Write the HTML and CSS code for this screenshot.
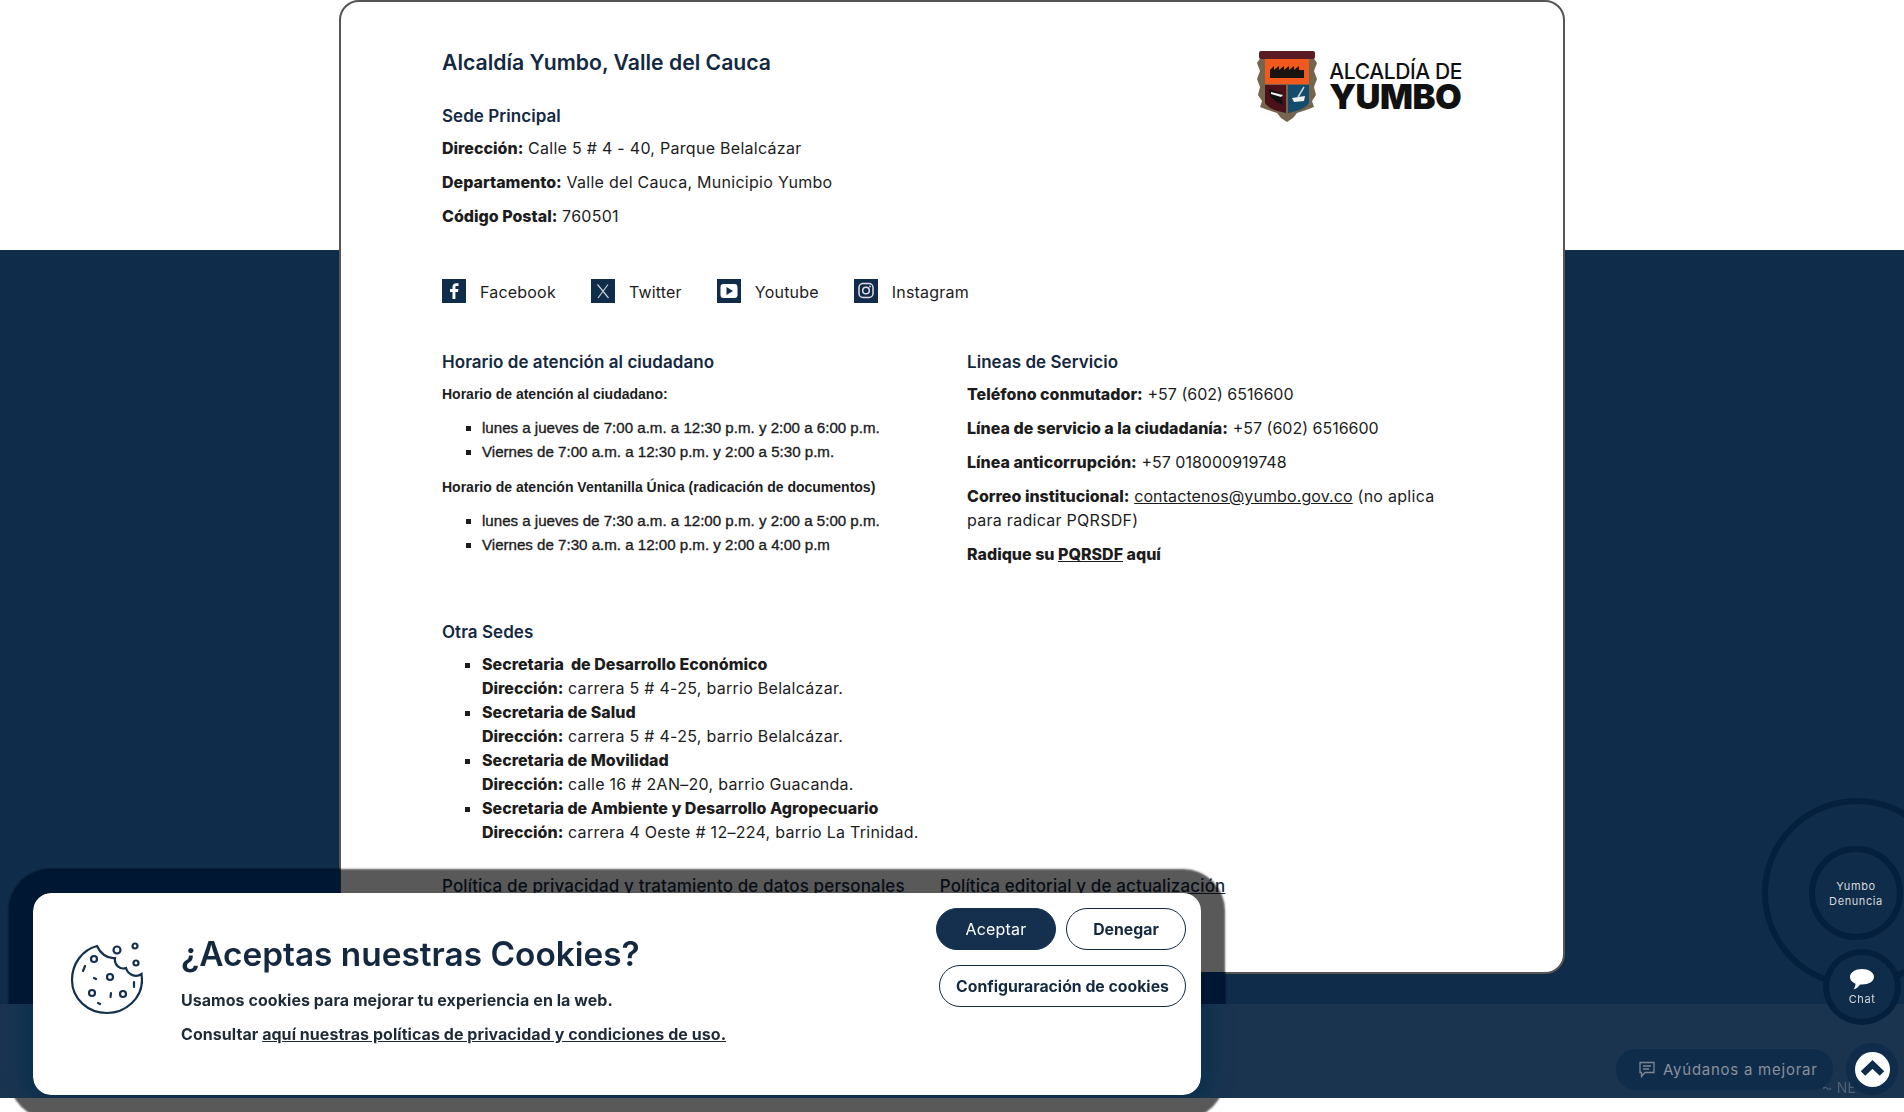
FILE: index.html
```html
<!DOCTYPE html>
<html lang="es">
<head>
    <meta charset="UTF-8">
    <meta name="viewport" content="width=device-width, initial-scale=1.0">
    <title>Alcaldía de Yumbo</title>
    <link rel="stylesheet" href="styles.css">
</head>
<body>

    <main class="main">
        <div class="contact-card">

            <!-- Header -->
            <div class="card-top">
                <div>
                    <h1>Alcaldía Yumbo, Valle del Cauca</h1>
                    <h3 class="sede-title">Sede Principal</h3>
                    <p><b>Dirección:</b> Calle 5 # 4 - 40, Parque Belalcázar</p>
                    <p><b>Departamento:</b> Valle del Cauca, Municipio Yumbo</p>
                    <p><b>Código Postal:</b> 760501</p>
                </div>
                <div class="logo">
                    <svg class="shield" viewBox="0 0 60 71" width="60" height="71">
                        <path d="M4 6 L0 12 L3 20 L0 28 L3 36 L1 44 L5 50 L3 56 L11 59 L20 62 L24 67 L30 71 L36 67 L40 62 L49 59 L57 56 L55 50 L59 44 L57 36 L60 28 L57 20 L60 12 L56 6 Z" fill="#75654f"/>
                        <rect x="2" y="0" width="56" height="8" rx="2" fill="#5c1a22"/>
                        <rect x="8" y="8" width="44" height="25" fill="#f2591c"/>
                        <path d="M13 27 V19 L17 15 V19 L22 15 V19 L27 15 V19 L32 15 V19 L37 15 V19 L42 15 V19 L47 19 V27 Z" fill="#1a1410"/>
                        <path d="M8 34 H29 V62 C20 60 12 58 8 52 Z" fill="#4a1118"/>
                        <path d="M31 34 H52 V52 C48 58 40 60 31 62 Z" fill="#124b6c"/>
                        <path d="M12 38 L24 42 L26 54 L18 50 L13 45 Z" fill="#15100f"/>
                        <path d="M14 41 L26 44 L24 46 L14 43 Z" fill="#eee"/>
                        <path d="M35 47 L48 45 L47 50 L37 51 Z" fill="#eee"/>
                        <path d="M41 46 L47 36" stroke="#c9d4da" stroke-width="1.5"/>
                    </svg>
                    <div class="logo-text">
                        <span class="logo-small">ALCALDÍA DE</span>
                        <span class="logo-big">YUMBO</span>
                    </div>
                </div>
            </div>

            <!-- Redes -->
            <div class="social">
                <a class="social-link" href="#">
                    <svg viewBox="0 0 24 24" width="24" height="24"><rect width="24" height="24" fill="#0f2c4b"/><path d="M13.4 20 V12.9 H16 L16.4 10 H13.4 V8.3 C13.4 7.4 13.7 6.9 14.9 6.9 H16.5 V4.3 C16.2 4.3 15.3 4.2 14.3 4.2 C12 4.2 10.500 5.600 10.500 8 V10 H8 V12.900 H10.500 V20 Z" fill="#fff"/></svg>
                    <span>Facebook</span>
                </a>
                <a class="social-link" href="#">
                    <svg viewBox="0 0 24 24" width="24" height="24"><rect width="24" height="24" fill="#0f2c4b"/><path d="M6.500 5.500 L17.500 19 M17 5.500 L7 19" stroke="#c9ced6" stroke-width="1.200" fill="none"/></svg>
                    <span>Twitter</span>
                </a>
                <a class="social-link" href="#">
                    <svg viewBox="0 0 24 24" width="24" height="24"><rect width="24" height="24" fill="#0f2c4b"/><rect x="3.500" y="5" width="17" height="14" rx="3" fill="#fff"/><path d="M9.500 8 L16 12 L9.500 16 Z" fill="#0f2c4b"/></svg>
                    <span>Youtube</span>
                </a>
                <a class="social-link" href="#">
                    <svg viewBox="0 0 24 24" width="24" height="24"><rect width="24" height="24" fill="#0f2c4b"/><rect x="5" y="4.500" width="14" height="14" rx="4" fill="none" stroke="#e3dbe8" stroke-width="1.500"/><circle cx="12" cy="11.500" r="3.300" fill="none" stroke="#e3dbe8" stroke-width="1.500"/><circle cx="16" cy="7.500" r=".9" fill="#e3dbe8"/></svg>
                    <span>Instagram</span>
                </a>
            </div>

            <!-- Horarios y lineas -->
            <div class="columns">
                <div class="col-left">
                    <h3>Horario de atención al ciudadano</h3>
                    <p class="small-title">Horario de atención al ciudadano:</p>
                    <ul class="hours">
                        <li>lunes a jueves de 7:00 a.m. a 12:30 p.m. y 2:00 a 6:00 p.m.</li>
                        <li>Viernes de 7:00 a.m. a 12:30 p.m. y 2:00 a 5:30 p.m.</li>
                    </ul>
                    <p class="small-title">Horario de atención Ventanilla Única (radicación de documentos)</p>
                    <ul class="hours">
                        <li>lunes a jueves de 7:30 a.m. a 12:00 p.m. y 2:00 a 5:00 p.m.</li>
                        <li>Viernes de 7:30 a.m. a 12:00 p.m. y 2:00 a 4:00 p.m</li>
                    </ul>
                </div>
                <div class="col-right">
                    <h3>Lineas de Servicio</h3>
                    <p><b>Teléfono conmutador:</b> <span class="phone">+57 (602) 6516600</span></p>
                    <p><b>Línea de servicio a la ciudadanía:</b> <span class="phone">+57 (602) 6516600</span></p>
                    <p><b>Línea anticorrupción:</b> <span class="phone">+57 018000919748</span></p>
                    <p><b>Correo institucional:</b> <a class="mail" href="#">contactenos@yumbo.gov.co</a> (no aplica<br>para radicar PQRSDF)</p>
                    <p><b>Radique su <a href="#">PQRSDF</a> aquí</b></p>
                </div>
            </div>

            <!-- Otras sedes -->
            <h3>Otra Sedes</h3>
            <ul class="sedes">
                <li><b>Secretaria &nbsp;de Desarrollo Económico</b><br><b>Dirección:</b> carrera 5 # 4-25, barrio Belalcázar.</li>
                <li><b>Secretaria de Salud</b><br><b>Dirección:</b> carrera 5 # 4-25, barrio Belalcázar.</li>
                <li><b>Secretaria de Movilidad</b><br><b>Dirección:</b> calle 16 # 2AN–20, barrio Guacanda.</li>
                <li><b>Secretaria de Ambiente y Desarrollo Agropecuario</b><br><b>Dirección:</b> carrera 4 Oeste # 12–224, barrio La Trinidad.</li>
            </ul>

            <div class="policy-links">
                <a href="#">Política de privacidad y tratamiento de datos personales</a>
                <a href="#">Política editorial y de actualización</a>
            </div>
        </div>
    </main>

    <footer class="footer"></footer>

    <!-- Botones flotantes -->
    <div class="big-ring"></div>
    <a class="float-circle denuncia" href="#">Yumbo<br>Denuncia</a>
    <a class="float-circle chat" href="#">
        <svg viewBox="0 0 24 21" width="24" height="21"><path d="M12 0 C18.500 0 24 3.500 24 8 C24 12.500 18.500 15.500 12 15.500 L10 15.500 C8.500 18 6 20 3.500 20.500 C5 18.500 5.500 16.500 5.500 14.800 C2.300 13.500 0 11 0 8 C0 3.500 5.500 0 12 0 Z" fill="#fff"/></svg>
        <span>Chat</span>
    </a>
    <a class="feedback" href="#">
        <svg viewBox="0 0 18 18" width="18" height="18"><path d="M2 1.500 H16 V11.500 H7 L3.500 15.500 V11.500 H2 Z M5 5 H13 M5 8 H11" fill="none" stroke="#7e8792" stroke-width="1.300"/></svg>
        <span>Ayúdanos a mejorar</span>
    </a>
    <span class="faint-mark">⁓ NE</span>
    <a class="to-top" href="#">
        <svg viewBox="0 0 35 35" width="35" height="35"><circle cx="17.500" cy="17.500" r="17.500" fill="#fff"/><path d="M8 21.500 L17.500 12.500 L27 21.500" fill="none" stroke="#0f2c4b" stroke-width="6.500"/></svg>
    </a>

    <!-- Cookies -->
    <div class="cookie-box">
        <svg class="cookie-icon" viewBox="0 0 73 73" width="73" height="73" fill="none" stroke="#14304f" stroke-width="2.200" stroke-linecap="round">
            <path d="M27 4 C12 8 2 22 2 38 C2 57 18 71 37 71 C56 71 72 56 72 38 L71.500 32 C66 36 58 33 56 26 C50 28 44 23 45 16 C37 17 30 11 27 4 Z"/>
            <circle cx="47" cy="8" r="3.500"/><circle cx="65" cy="4" r="2.500"/><circle cx="66" cy="21" r="2.500"/>
            <circle cx="24" cy="17" r="3"/><circle cx="40" cy="35" r="3"/><circle cx="22" cy="51" r="3"/><circle cx="53" cy="52" r="3"/>
            <path d="M15 24 L13 29 M24 36 L26 37 M64 40 L64 45 M41 51 L40.500 55 M28 61 L30 62"/>
        </svg>
        <div class="cookie-text">
            <h2>¿Aceptas nuestras Cookies?</h2>
            <p>Usamos cookies para mejorar tu experiencia en la web.</p>
            <p>Consultar <a href="#">aquí nuestras políticas de privacidad y condiciones de uso.</a></p>
        </div>
        <div class="cookie-actions">
            <div class="cookie-row">
                <button class="btn btn-dark">Aceptar</button>
                <button class="btn">Denegar</button>
            </div>
            <button class="btn btn-wide">Configuraración de cookies</button>
        </div>
    </div>

</body>
</html>
```

FILE: styles.css
```css
/* Reset default margins and paddings */
* {
    margin: 0;
    padding: 0;
    box-sizing: border-box;
}

html, body {
    height: 1112px;
    overflow: hidden;
}

body {
    font-family: 'Inter', 'Open Sans', sans-serif;
    font-size: 16px;
    line-height: 24px;
    letter-spacing: 0.28px;
    color: #1c1c1c;
    background-color: #fff;
}

a {
    color: inherit;
}

b {
    font-weight: 800;
    letter-spacing: 0;
}

.phone {
    letter-spacing: 0;
}

.mail {
    letter-spacing: 0.1px;
}

/* Page background */
.main {
    height: 1004px;
    background: linear-gradient(#fff 250px, #0f2c4b 250px);
}

.footer {
    height: 94px;
    background-color: #1a3450;
}

/* Card */
.contact-card {
    width: 1226px;
    height: 974px;
    margin: 0 auto;
    padding: 46px 101px 0;
    background-color: #fff;
    border: 2px solid #555;
    border-radius: 20px;
}

.contact-card p {
    margin-bottom: 10px;
}

h1 {
    font-size: 21.2px;
    line-height: 28px;
    font-weight: 600;
    letter-spacing: 0;
    color: #14293f;
}

h3 {
    font-size: 17px;
    line-height: 24px;
    font-weight: 600;
    letter-spacing: 0.05px;
    color: #14293f;
}

.card-top {
    display: flex;
    justify-content: space-between;
}

.sede-title {
    margin-top: 28px;
    margin-bottom: 8px;
}

/* Logo */
.logo {
    display: flex;
    gap: 12px;
    margin-top: 3px;
    height: 71px;
}

.logo-text {
    display: flex;
    flex-direction: column;
    padding-top: 10px;
    color: #111;
}

.logo-small {
    font-size: 21px;
    line-height: 22px;
    font-weight: 500;
    letter-spacing: -0.4px;
}

.logo-big {
    font-size: 34.5px;
    line-height: 28px;
    font-weight: 900;
    letter-spacing: -0.5px;
}

/* Social */
.social {
    display: flex;
    gap: 35px;
    margin-top: 39px;
}

.social-link {
    display: flex;
    align-items: center;
    gap: 14px;
    text-decoration: none;
    letter-spacing: 0.2px;
}

.social-link span {
    padding-top: 3px;
}

/* Columns */
.columns {
    display: flex;
    margin-top: 46px;
    margin-bottom: 44px;
}

.col-left {
    width: 525px;
    flex-shrink: 0;
}

.col-right {
    flex: 1;
    padding-right: 20px;
}

.col-left h3,
.col-right h3 {
    margin-bottom: 8px;
}

.small-title {
    font-family: 'Liberation Sans', Arial, sans-serif;
    font-size: 14px;
    font-weight: 700;
    letter-spacing: 0;
}

.hours {
    list-style: square;
    margin: 10px 0 10px 40px;
    font-family: 'Liberation Sans', Arial, sans-serif;
    font-size: 15.1px;
    font-weight: 500;
    letter-spacing: 0;
    -webkit-text-stroke: 0.35px #1c1c1c;
}

.hours li {
    line-height: 24.4px;
}

.sedes {
    list-style: square;
    margin: 8px 0 30px 40px;
}

/* Footer links in the card */
.policy-links {
    display: flex;
    gap: 35px;
    color: #14293f;
    font-size: 17px;
    font-weight: 500;
    letter-spacing: 0.13px;
}

/* Floating buttons */
.big-ring {
    position: fixed;
    left: 1762px;
    top: 798px;
    width: 190px;
    height: 190px;
    border: 6px solid #04203d;
    border-radius: 50%;
}

.float-circle {
    position: fixed;
    display: flex;
    flex-direction: column;
    align-items: center;
    justify-content: center;
    text-align: center;
    text-decoration: none;
    color: #d8d8d8;
    font-size: 11px;
    line-height: 15px;
    letter-spacing: 0.6px;
    background-color: #0f2c4b;
    border: 6px solid #04203d;
    border-radius: 50%;
}

.denuncia {
    left: 1809px;
    top: 846px;
    width: 94px;
    height: 94px;
    padding-top: 1px;
}

.chat {
    left: 1823px;
    top: 949px;
    width: 78px;
    height: 76px;
    gap: 2px;
    padding-top: 2px;
}

.feedback {
    position: fixed;
    left: 1616px;
    top: 1049px;
    width: 217px;
    height: 41px;
    display: flex;
    align-items: center;
    gap: 7px;
    padding-left: 22px;
    font-size: 15px;
    letter-spacing: 0.75px;
    color: #8a8f99;
    text-decoration: none;
    background-color: #0f2c4b;
    border-radius: 20px;
}

.faint-mark {
    position: fixed;
    left: 1822px;
    top: 1076px;
    font-size: 14px;
    color: #4d6075;
}

.to-top {
    position: fixed;
    left: 1846px;
    top: 1043px;
    width: 52px;
    height: 52px;
    display: flex;
    align-items: center;
    justify-content: center;
    background-color: #0f2c4b;
    border-radius: 50%;
}

/* Cookie banner */
.cookie-box {
    position: fixed;
    left: 33px;
    top: 893px;
    width: 1168px;
    height: 202px;
    display: flex;
    padding: 12px 15px 0 37px;
    background-color: #fff;
    border-radius: 18px;
    box-shadow: 0 0 2px 24px rgba(0, 0, 0, 0.65);
}

/* the dark halo looks different over the navy parts of the page */
.cookie-box::before,
.cookie-box::after {
    content: "";
    position: absolute;
    inset: 0;
    border-radius: 18px;
}

.cookie-box::before {
    box-shadow: 0 0 2px 24px #001733;
    clip-path: path("M-40 -40H307V111H-40Z M1168 79H1240V111H1168Z");
}

.cookie-box::after {
    box-shadow: 0 0 22px 8px #08304d, 0 0 0 30px #1a3450;
    clip-path: path("M-40 111H1240V205H-40Z");
}

.cookie-icon {
    flex-shrink: 0;
    margin-top: 37px;
}

.cookie-text {
    flex: 1;
    margin-left: 38px;
    padding-top: 29px;
    color: #1e2a36;
}

.cookie-text h2 {
    font-size: 33.4px;
    line-height: 40px;
    font-weight: 600;
    letter-spacing: 0;
    color: #14293f;
    margin-bottom: 14px;
}

.cookie-text p {
    font-weight: 700;
    letter-spacing: 0.05px;
    margin-bottom: 10px;
}

.cookie-actions {
    display: flex;
    flex-direction: column;
    align-items: flex-end;
    gap: 15px;
    padding-top: 3px;
}

.cookie-row {
    display: flex;
    gap: 10px;
}

/* Buttons */
.btn {
    width: 120px;
    height: 42px;
    font-family: inherit;
    font-size: 15.8px;
    font-weight: 700;
    color: #14293f;
    background-color: #fff;
    border: 1.5px solid #14293f;
    border-radius: 21px;
}

.btn-dark {
    font-size: 16px;
    font-weight: 400;
    letter-spacing: 0.2px;
    color: #fff;
    background-color: #15304f;
    border-color: #15304f;
}

.btn-wide {
    width: 247px;
}
```
